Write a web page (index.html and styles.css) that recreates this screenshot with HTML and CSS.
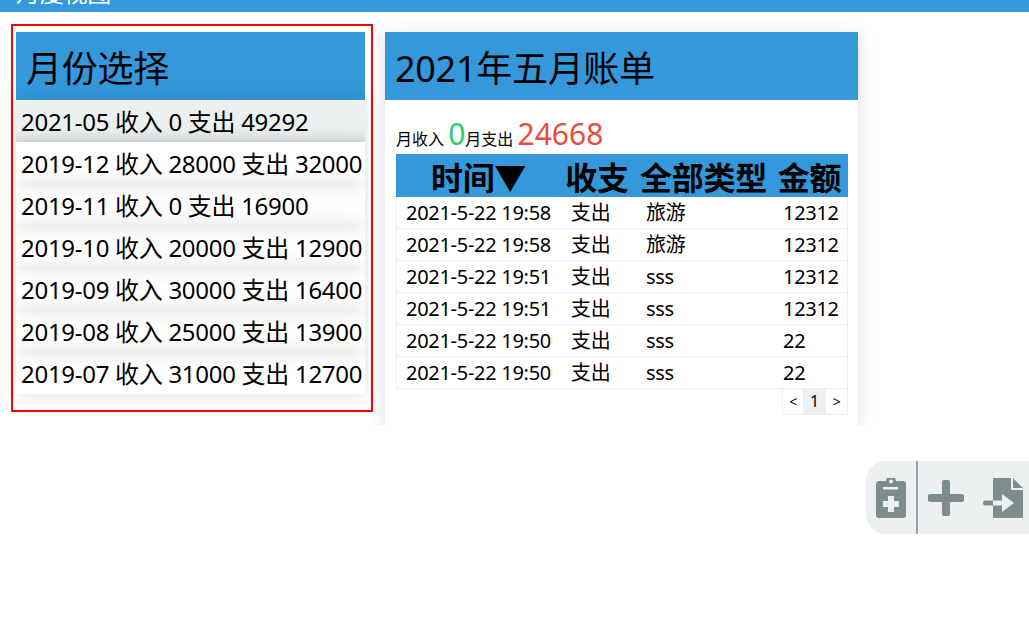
FILE: index.html
```html
<!DOCTYPE html>
<html lang="en">
<head>
    <meta charset="UTF-8">
    <meta name="viewport" content="width=device-width, initial-scale=1.0">
    <title>月度视图</title>
    <link rel="stylesheet" href="styles.css">
</head>
<body>

    <div class="top-bar"><span>月度视图</span></div>

    <div class="main">
        <div class="month-box">
            <div class="panel-title">月份选择</div>
            <div class="month-item active">2021-05 收入 0 支出 49292</div>
            <div class="month-item next">2019-12 收入 28000 支出 32000</div>
            <div class="month-item">2019-11 收入 0 支出 16900</div>
            <div class="month-item">2019-10 收入 20000 支出 12900</div>
            <div class="month-item">2019-09 收入 30000 支出 16400</div>
            <div class="month-item">2019-08 收入 25000 支出 13900</div>
            <div class="month-item">2019-07 收入 31000 支出 12700</div>
        </div>

        <div class="bill-card">
            <div class="panel-title">2021年五月账单</div>
            <div class="bill-body">
                <div class="summary">
                    月收入 <span class="income">0</span>月支出 <span class="expense">24668</span>
                </div>
                <table class="bill-table">
                    <colgroup>
                        <col class="col-time">
                        <col class="col-kind">
                        <col class="col-type">
                        <col class="col-money">
                    </colgroup>
                    <thead>
                        <tr><th>时间▼</th><th>收支</th><th>全部类型</th><th>金额</th></tr>
                    </thead>
                    <tbody>
                        <tr><td>2021-5-22 19:58</td><td>支出</td><td>旅游</td><td>12312</td></tr>
                        <tr><td>2021-5-22 19:58</td><td>支出</td><td>旅游</td><td>12312</td></tr>
                        <tr><td>2021-5-22 19:51</td><td>支出</td><td>sss</td><td>12312</td></tr>
                        <tr><td>2021-5-22 19:51</td><td>支出</td><td>sss</td><td>12312</td></tr>
                        <tr><td>2021-5-22 19:50</td><td>支出</td><td>sss</td><td>22</td></tr>
                        <tr><td>2021-5-22 19:50</td><td>支出</td><td>sss</td><td>22</td></tr>
                    </tbody>
                </table>
                <div class="pager">
                    <span class="page-btn prev">&lt;</span>
                    <span class="page-btn current">1</span>
                    <span class="page-btn next-page">&gt;</span>
                </div>
            </div>
        </div>
    </div>

    <div class="float-tools">
        <svg class="tool tool-clip" viewBox="0 0 30 40">
            <path fill-rule="evenodd" d="M3 3h7a5 5 0 0 1 10 0h7a3 3 0 0 1 3 3v31a3 3 0 0 1-3 3H3a3 3 0 0 1-3-3V6a3 3 0 0 1 3-3zM15 1.500a2 2 0 1 0 0 4 2 2 0 0 0 0-4zM7 9v2.500h15V9zM12 18v5H7v6h5v5h6v-5h5v-6h-5v-5z"/>
        </svg>
        <div class="tool-line"></div>
        <svg class="tool tool-plus" viewBox="0 0 36 36">
            <path d="M14 3a4 4 0 0 1 8 0v11h11a4 4 0 0 1 0 8H22v11a4 4 0 0 1-8 0V22H3a4 4 0 0 1 0-8h11z"/>
        </svg>
        <svg class="tool tool-file" viewBox="0 0 40 40">
            <path d="M10 1a1 1 0 0 1 1-1h17v11a1 1 0 0 0 1 1h11v27a1 1 0 0 1-1 1H11a1 1 0 0 1-1-1V27.500h9V34l12-9-12-9v6.500h-9zM30 0l10 10H30z"/>
            <path d="M2.500 22.500h7.500v5H2.500a2.500 2.500 0 0 1 0-5z"/>
        </svg>
    </div>

</body>
</html>
```

FILE: styles.css
```css
body {
    margin: 0;
    font-family: "Noto Sans", "Noto Sans CJK SC", sans-serif;
    letter-spacing: -0.018em;
    color: #000;
    background: #fff;
}
.top-bar {
    height: 12px;
    background: #3498db;
    color: #fff;
    font-size: 24px;
    line-height: 38px;
    padding-left: 16px;
    overflow: hidden;
    display: flex;
    align-items: flex-end;
}
.top-bar span {
    white-space: nowrap;
}
.main {
    display: flex;
    align-items: flex-start;
    padding: 12px 0 0 11px;
}
.month-box {
    border: 2px solid red;
    padding: 6px 6px 16px 3px;
    width: 349px;
    height: 362px;
}
.panel-title {
    height: 68px;
    line-height: 74px;
    padding-left: 10px;
    background: #3498db;
    font-size: 36px;
}
.month-item {
    height: 42px;
    line-height: 44px;
    padding-left: 5px;
    font-size: 24px;
    white-space: nowrap;
    box-shadow: 0 0 20px rgba(0, 0, 0, 0.14);
}
.month-item.active {
    background: #ecf0f1;
    box-shadow: 0 0 20px rgba(0, 0, 0, 0.14), inset 0 -10px 10px -8px rgba(0, 0, 0, 0.1);
}
.month-item.next {
    background: #fff;
}
.bill-card {
    width: 473px;
    margin: 8px 0 0 12px;
    box-shadow: 0 4px 18px rgba(0, 0, 0, 0.14);
    background: #fff;
}
.bill-body {
    padding: 16px 10px 10px 11px;
}
.summary {
    height: 38px;
    font-size: 16px;
    line-height: 36px;
    letter-spacing: 0;
    white-space: nowrap;
}
.income {
    color: #2ecc71;
    font-size: 30px;
}
.expense {
    color: #e74c3c;
    font-size: 30px;
}
.bill-table {
    width: 452px;
    table-layout: fixed;
    border-collapse: separate;
    border-spacing: 0;
}
.col-time { width: 165px; }
.col-kind { width: 75px; }
.col-type { width: 138px; }
.col-money { width: 74px; }
.bill-table th {
    height: 43px;
    padding: 4px 0 0;
    box-sizing: border-box;
    line-height: 39px;
    background: #3498db;
    font-size: 32px;
    white-space: nowrap;
}
.bill-table th:not(:first-child) {
    padding-right: 3px;
}
.bill-table td {
    height: 32px;
    box-sizing: border-box;
    line-height: 31px;
    padding: 0 10px;
    font-size: 20px;
    border-bottom: 1px solid #eee;
    white-space: nowrap;
}
.bill-table td:first-child {
    border-left: 1px solid #eee;
    padding-left: 9px;
}
.bill-table td:last-child {
    border-right: 1px solid #eee;
    padding-left: 9px;
}
.pager {
    display: flex;
    justify-content: flex-end;
    height: 26px;
}
.page-btn {
    box-sizing: border-box;
    line-height: 25px;
    text-align: center;
    font-size: 14px;
    border-bottom: 1px solid #eee;
}
.page-btn.prev {
    width: 21px;
    border-left: 1px solid #eee;
}
.page-btn.next-page {
    width: 22px;
    border-right: 1px solid #eee;
}
.page-btn.current {
    width: 23px;
    font-size: 16px;
    background: #ecf0f1;
}
.float-tools {
    position: fixed;
    left: 866px;
    top: 461px;
    width: 163px;
    height: 73px;
    background: #ecf0f1;
    border-radius: 20px 0 0 20px;
    display: flex;
    align-items: center;
}
.tool {
    fill: #7f8c8d;
    display: block;
}
.tool-clip { width: 30px; height: 40px; margin-left: 10px; }
.tool-line { width: 2px; height: 73px; background: #95a5a6; margin-left: 10px; }
.tool-plus { width: 36px; height: 36px; margin-left: 10px; }
.tool-file { width: 40px; height: 40px; margin-left: 19px; }
```
